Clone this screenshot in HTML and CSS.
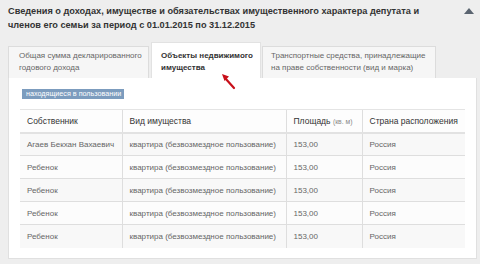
FILE: index.html
```html
<!DOCTYPE html>
<html lang="ru">
<head>
<meta charset="utf-8">
<link rel="stylesheet" href="styles.css">
</head>
<body>
<div class="page">
  <div class="head">
    <h1 class="title">Сведения о доходах, имуществе и обязательствах имущественного характера депутата и членов его семьи за период с 01.01.2015 по 31.12.2015</h1>
    <svg class="caret" width="10" height="6" viewBox="0 0 10 6"><path d="M0 6 L5 0 L10 6 Z" fill="#5a6470"/></svg>
  </div>
  <div class="tabs">
    <div class="tab t1">Общая сумма декларированного годового дохода</div>
    <div class="tab active">Объекты недвижимого имущества
      <svg class="arrow" width="16" height="18" viewBox="0 0 16 18"><path d="M13 15 L4 5" stroke="#c8101a" stroke-width="2.2" stroke-linecap="round"/><path d="M1 1 L8 3.5 L3.5 8 Z" fill="#c8101a"/></svg>
    </div>
    <div class="tab t3">Транспортные средства, принадлежащие на праве собственности (вид и марка)</div>
  </div>
  <div class="panel">
    <div class="badge">находящиеся в пользовании</div>
    <table class="grid">
      <thead>
        <tr><th class="c1">Собственник</th><th class="c2">Вид имущества</th><th class="c3">Площадь <span class="unit">(кв. м)</span></th><th class="c4">Страна расположения</th></tr>
      </thead>
      <tbody>
        <tr><td>Агаев Бекхан Вахаевич</td><td>квартира (безвозмездное пользование)</td><td>153,00</td><td>Россия</td></tr>
        <tr><td>Ребенок</td><td>квартира (безвозмездное пользование)</td><td>153,00</td><td>Россия</td></tr>
        <tr><td>Ребенок</td><td>квартира (безвозмездное пользование)</td><td>153,00</td><td>Россия</td></tr>
        <tr><td>Ребенок</td><td>квартира (безвозмездное пользование)</td><td>153,00</td><td>Россия</td></tr>
        <tr><td>Ребенок</td><td>квартира (безвозмездное пользование)</td><td>153,00</td><td>Россия</td></tr>
      </tbody>
    </table>
  </div>
</div>
</body>
</html>
```

FILE: styles.css
```css
html, body {
  margin: 0;
  padding: 0;
  background: #eeeeee;
}
body {
  font-family: "Liberation Sans", Arial, sans-serif;
  color: #333;
  width: 480px;
  height: 264px;
  overflow: hidden;
}
.page {
  padding: 5px 3px 0 8px;
}
.head {
  display: flex;
  align-items: flex-start;
  justify-content: space-between;
}
.title {
  margin: 0;
  font-size: 9.2px;
  line-height: 13.5px;
  font-weight: bold;
  color: #333;
  width: 436px;
}
.caret {
  margin: 3px 3px 0 0;
}
.tabs {
  display: flex;
  align-items: flex-end;
  margin-top: 10px;
}
.tab {
  box-sizing: border-box;
  height: 32px;
  padding: 3px 3px 0 10px;
  font-size: 8px;
  line-height: 12px;
  color: #666;
  background: #f6f6f6;
  border: 1px solid #dcdcdc;
  border-bottom: none;
}
.t1 { width: 141px; }
.t3 { width: 174px; margin-left: 1px; padding-left: 8px; }
.tab.active {
  position: relative;
  width: 110px;
  height: 36px;
  margin-left: 2px;
  padding: 7px 0 0 9px;
  background: #fff;
  color: #333;
  font-weight: bold;
  border-color: #e2e2e2;
}
.arrow {
  position: absolute;
  left: 69px;
  top: 30px;
}
.panel {
  box-sizing: border-box;
  width: 469px;
  height: 181px;
  background: #fff;
  border: 1px solid #e0e0e0;
  border-top: none;
  padding: 11px 11px 0 11px;
}
.badge {
  width: 102px;
  box-sizing: border-box;
  background: #7c9cbe;
  color: #fff;
  font-size: 7.2px;
  line-height: 10px;
  padding: 0 0 0 4px;
  margin-left: 2px;
  white-space: nowrap;
  overflow: hidden;
}
.grid {
  margin-top: 10px;
  border-collapse: collapse;
  width: 445px;
  table-layout: fixed;
  font-size: 8px;
}
.grid th, .grid td {
  box-sizing: border-box;
  text-align: left;
  padding: 0 0 0 7px;
  border-left: 1px solid #dedede;
  border-top: 1px solid #dedede;
  white-space: nowrap;
}
.grid th:first-child, .grid td:first-child { border-left: none; }
.grid th {
  height: 23px;
  font-weight: normal;
  font-size: 8.5px;
  color: #333;
  background: #fdfdfd;
  border-top: 1px solid #e4e4e4;
  border-bottom: 2px solid #e2e2e2;
}
.grid td {
  height: 23px;
  color: #666;
}
.grid tbody tr:nth-child(odd) td { background: #f8f8f8; }
.grid tbody tr:nth-child(even) td { background: #fcfcfc; }
.grid tbody tr:first-child td { border-top: none; }
.c1 { width: 102px; }
.c2 { width: 164px; }
.c3 { width: 76px; }
.c4 { width: 103px; }
.unit {
  font-size: 6.8px;
  color: #888;
}
```
